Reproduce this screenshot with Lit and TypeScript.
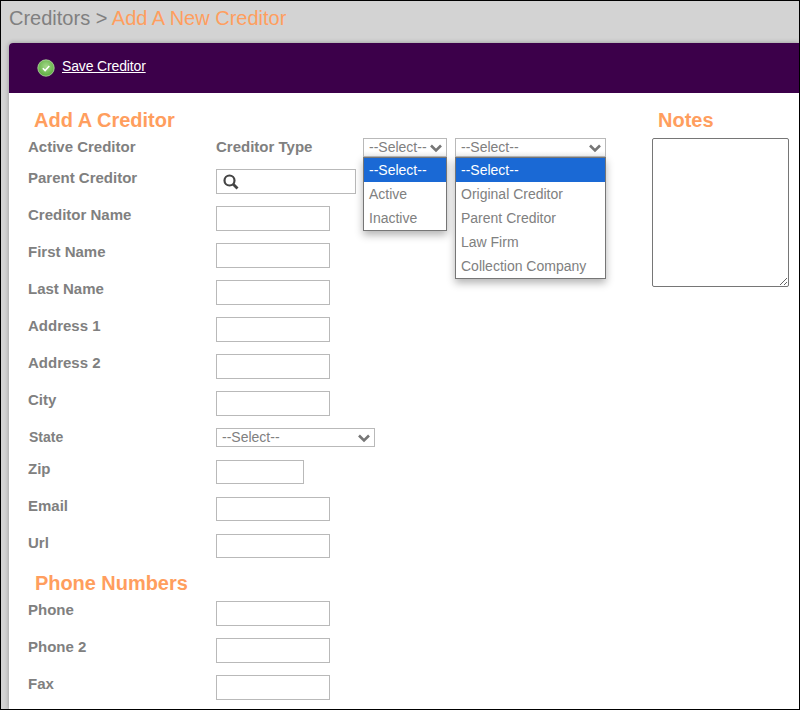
import { LitElement, html, css, nothing } from 'lit';
import { customElement, property } from 'lit/decorators.js';

@customElement('fake-select')
export class FakeSelect extends LitElement {
  static styles = css`
    :host {
      display: block;
      position: relative;
      font: 14px 'Liberation Sans', Arial, sans-serif;
      color: #808080;
    }
    .box {
      display: flex;
      align-items: center;
      justify-content: space-between;
      height: 19px;
      box-sizing: border-box;
      padding: 0 3px 0 5px;
      border: 1px solid #b9b9b9;
      background: #fff;
      line-height: 17px;
    }
    /* the open menu's shadow falls a little on the box above it */
    :host([open]) .box {
      background: linear-gradient(#fff 70%, #f1f1f1);
    }
    svg {
      display: block;
      flex-shrink: 0;
    }
    .menu {
      position: absolute;
      top: 19px;
      left: 0;
      right: 0;
      z-index: 2;
      background: #fff;
      border: 1px solid #767676;
      box-shadow: 0 4px 8px rgba(0, 0, 0, 0.3);
    }
    .opt {
      height: 24px;
      line-height: 24px;
      padding: 0 5px;
      white-space: nowrap;
    }
    .opt.on {
      background: #1a69d5;
      color: #fff;
    }
  `;

  @property({ type: Array }) options: string[] = [];
  @property({ type: Boolean, reflect: true }) open = false;

  render() {
    return html`
      <div class="box">
        <span>--Select--</span>
        <svg width="14" height="10" viewBox="0 0 14 10" aria-hidden="true">
          <path d="M2 2.5l5 5 5-5" fill="none" stroke="#767676" stroke-width="2.6" />
        </svg>
      </div>
      ${this.open
        ? html`<div class="menu">
            ${this.options.map(
              (o, i) => html`<div class="opt ${i === 0 ? 'on' : ''}">${o}</div>`
            )}
          </div>`
        : nothing}
    `;
  }
}

@customElement('app-root')
export class AppRoot extends LitElement {
  static styles = css`
    :host {
      display: block;
      width: 800px;
      height: 710px;
      box-sizing: border-box;
      border: 1px solid #000;
      overflow: hidden;
      background: #d3d3d3;
      font-family: 'Liberation Sans', Arial, sans-serif;
      color: #808080;
    }
    .title {
      height: 42px;
      box-sizing: border-box;
      padding: 6px 0 0 8px;
      font-size: 20px;
      line-height: 23px;
      color: #808080;
    }
    .title span {
      color: #ff9e5e;
    }
    .panel {
      margin-left: 8px;
      height: 667px;
      background: #fff;
      border-radius: 4px 0 0 0;
      box-shadow: 0 0 5px rgba(0, 0, 0, 0.3);
      overflow: hidden;
    }
    .bar {
      display: flex;
      align-items: center;
      gap: 7px;
      height: 50px;
      box-sizing: border-box;
      padding: 0 0 5px 28px;
      background: #3c004a;
    }
    .bar a {
      font-size: 14px;
      letter-spacing: -0.15px;
      color: #fff;
      text-decoration: underline;
    }
    .bar svg {
      display: block;
      margin-top: 5px;
    }
    .body {
      display: flex;
      justify-content: space-between;
      padding: 15px 10px 0 19px;
    }
    h2 {
      margin: 0 0 6px 6px;
      font-size: 20px;
      line-height: 24px;
      font-weight: bold;
      color: #ff9e5e;
    }
    h2.phones {
      margin-left: 7px;
      letter-spacing: -0.05px;
    }
    h2.notes {
      margin-left: 6px;
    }
    .form {
      width: 600px;
    }
    .row {
      display: grid;
      grid-template-columns: 188px 1fr;
      align-items: start;
      height: 37px;
    }
    .row.first {
      height: 31px;
    }
    .row.state {
      height: 32px;
    }
    label {
      display: block;
      margin-top: 1px;
      font-size: 15px;
      line-height: 16px;
      font-weight: bold;
      color: #808080;
    }
    .state label {
      padding-left: 1px;
      font-size: 14px;
    }
    input {
      display: block;
      width: 114px;
      height: 25px;
      box-sizing: border-box;
      border: 1px solid #b9b9b9;
      background: #fff;
      margin: 0;
    }
    input.short {
      height: 24px;
    }
    input.zip {
      width: 88px;
      height: 24px;
    }
    .types {
      display: flex;
      align-items: flex-start;
    }
    .types label {
      width: 147px;
    }
    .active {
      width: 84px;
      margin-right: 8px;
    }
    .kind {
      width: 151px;
    }
    .state-select {
      width: 159px;
    }
    .search {
      position: relative;
      width: 140px;
    }
    .search input {
      width: 140px;
    }
    .search svg {
      position: absolute;
      left: 7px;
      top: 5px;
    }
    .side {
      width: 137px;
    }
    textarea {
      display: block;
      width: 137px;
      height: 149px;
      box-sizing: border-box;
      border: 1px solid #767676;
      border-radius: 2px;
      background: #fff;
      margin: 0;
      padding: 2px;
    }
  `;

  private row(name: string, cls = '') {
    return html`<div class="row">
      <label>${name}</label>
      <input class=${cls} type="text" />
    </div>`;
  }

  render() {
    return html`
      <div class="title">Creditors &gt; <span>Add A New Creditor</span></div>
      <div class="panel">
        <div class="bar">
          <svg width="18" height="18" viewBox="0 0 18 18" aria-hidden="true">
            <defs>
              <radialGradient id="ok" cx="50%" cy="40%" r="60%">
                <stop offset="0" stop-color="#a4d88a" />
                <stop offset="1" stop-color="#5aab3d" />
              </radialGradient>
            </defs>
            <circle cx="9" cy="9" r="8.2" fill="url(#ok)" stroke="#b7dca6" stroke-width="0.8" />
            <path d="M5.8 9.2l2.3 2.3 4.2-4.5" fill="none" stroke="#fff" stroke-width="1.6" />
          </svg>
          <a href="#">Save Creditor</a>
        </div>
        <div class="body">
          <div class="form">
            <h2>Add A Creditor</h2>
            <div class="row first">
              <label>Active Creditor</label>
              <div class="types">
                <label>Creditor Type</label>
                <fake-select
                  class="active"
                  open
                  .options=${['--Select--', 'Active', 'Inactive']}
                ></fake-select>
                <fake-select
                  class="kind"
                  open
                  .options=${[
                    '--Select--',
                    'Original Creditor',
                    'Parent Creditor',
                    'Law Firm',
                    'Collection Company',
                  ]}
                ></fake-select>
              </div>
            </div>
            <div class="row">
              <label>Parent Creditor</label>
              <div class="search">
                <input type="text" />
                <svg width="16" height="16" viewBox="0 0 16 16" aria-hidden="true">
                  <circle cx="6.5" cy="6.5" r="5" fill="none" stroke="#444" stroke-width="2.2" />
                  <path d="M10 10l4.5 4.5" stroke="#444" stroke-width="2.8" />
                </svg>
              </div>
            </div>
            ${this.row('Creditor Name')} ${this.row('First Name')} ${this.row('Last Name')}
            ${this.row('Address 1')} ${this.row('Address 2')} ${this.row('City')}
            <div class="row state">
              <label>State</label>
              <fake-select class="state-select"></fake-select>
            </div>
            ${this.row('Zip', 'zip')} ${this.row('Email', 'short')} ${this.row('Url', 'short')}
            <h2 class="phones">Phone Numbers</h2>
            ${this.row('Phone')} ${this.row('Phone 2')} ${this.row('Fax')}
          </div>
          <div class="side">
            <h2 class="notes">Notes</h2>
            <textarea></textarea>
          </div>
        </div>
      </div>
    `;
  }
}
